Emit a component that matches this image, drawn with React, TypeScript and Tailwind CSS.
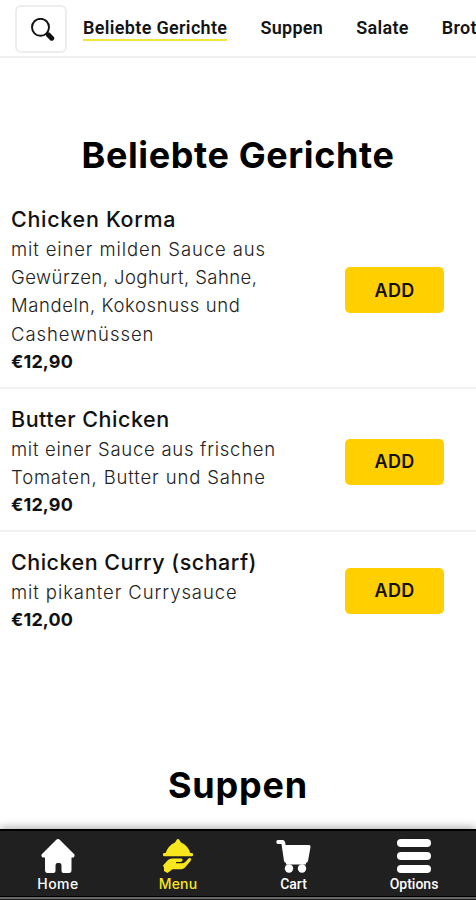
const categories = [
  { title: "Beliebte Gerichte", className: "ml-4 border-[#f3e63a] tracking-[0.33px]" },
  { title: "Suppen", className: "ml-[33px] border-transparent tracking-[0.3px]" },
  { title: "Salate", className: "ml-[33px] border-transparent tracking-[0.3px]" },
  { title: "Brot", className: "ml-[33px] border-transparent tracking-[0.3px]" },
];

const dishes = [
  {
    title: "Chicken Korma",
    spacing: "tracking-[0.7px]",
    lines: [
      { text: "mit einer milden Sauce aus", spacing: "tracking-[0.88px]" },
      { text: "Gewürzen, Joghurt, Sahne,", spacing: "tracking-[0.44px]" },
      { text: "Mandeln, Kokosnuss und", spacing: "tracking-[0.6px]" },
      { text: "Cashewnüssen", spacing: "tracking-[0.95px]" },
    ],
    price: "€12,90",
  },
  {
    title: "Butter Chicken",
    spacing: "tracking-[0.53px]",
    lines: [
      { text: "mit einer Sauce aus frischen", spacing: "tracking-[0.73px]" },
      { text: "Tomaten, Butter und Sahne", spacing: "tracking-[0.86px]" },
    ],
    price: "€12,90",
  },
  {
    title: "Chicken Curry (scharf)",
    spacing: "tracking-[0.49px]",
    lines: [{ text: "mit pikanter Currysauce", spacing: "tracking-[0.92px]" }],
    price: "€12,00",
  },
];

const SearchIcon = () => (
  <svg className="size-6" viewBox="0 0 24 24" fill="none" stroke="#111">
    <circle cx="9.500" cy="9.300" r="8.500" strokeWidth="1.900" />
    <path d="M15.500 15.500l2 2" strokeWidth="2" />
    <path d="M17.500 17l3.200 3.200" strokeWidth="5" strokeLinecap="round" />
  </svg>
);

const HomeIcon = () => (
  <svg className="h-[34px] w-[34px]" viewBox="0 0 34 34" fill="currentColor">
    <path d="M17 0Q18 0 19 1L33 15Q34.500 17 32.500 18.500H30.500V31Q30.500 34 28 34H22.500Q20.500 34 20.500 32V27Q20.500 24 18.500 24H16.500Q14.500 24 14.500 27V32Q14.500 34 12.500 34H6.500Q4 34 4 31V18.500H1.500Q-.5 17 1 15L15 1Q16 0 17 0Z" />
  </svg>
);

const MenuIcon = () => (
  <svg className="h-[34px] w-[32px]" viewBox="0 0 32 34" fill="currentColor">
    <path d="M16 0Q17.500 0 18 2L19 3.500Q26 6.500 28.500 14.500H3.500Q6 6.500 13 3.500L14 2Q14.500 0 16 0Z" />
    <rect x="1" y="14" width="30" height="3.200" rx="1.300" />
    <path d="M1 26.500L6 21Q7.500 19.500 10 19.500H19.500Q21 20 20.500 21.500Q20 22.800 18.500 23H14V24.200H20Q22 24.200 23.500 22.700L26.500 19.600Q28.200 18.500 29 19.700Q29.500 20.500 28.500 22L23 28.500Q21.500 30.300 19 30.300H10.500L5.500 34L2 32V29Z" />
  </svg>
);

const CartIcon = () => (
  <svg className="h-[34px] w-[35px]" viewBox="0 0 35 34" fill="currentColor">
    <path d="M2 1H6.500Q8.500 1 9 3L9.600 6H33Q34.800 6 34.500 8L32 22Q31.500 24 29.500 24H10.500Q8.500 24 8 22L5.500 5H2Q.3 5 .3 3Q.3 1 2 1Z" />
    <path d="M10 22H30V25.500H10Z" />
    <circle cx="13" cy="29.500" r="4.200" />
    <circle cx="26" cy="29.500" r="4.200" />
  </svg>
);

const OptionsIcon = () => (
  <svg className="h-[34px] w-[34px]" viewBox="0 0 34 34" fill="currentColor">
    <rect y="0" width="34" height="8" rx="4" />
    <rect y="13" width="34" height="8" rx="4" />
    <rect y="26" width="34" height="8" rx="4" />
  </svg>
);

const tabs = [
  { title: "Home", icon: HomeIcon, item: "w-[116px] text-white", label: "font-['Inter',sans-serif] text-[14px] tracking-[0.5px]" },
  { title: "Menu", icon: MenuIcon, item: "w-[124px] text-[#f8e71c]", label: "font-['Inter',sans-serif] text-[14px] tracking-[0.2px]" },
  { title: "Cart", icon: CartIcon, item: "w-[107px] text-white", label: "font-['Roboto',sans-serif] text-[14px]" },
  { title: "Options", icon: OptionsIcon, item: "w-[134px] text-white", label: "font-['Roboto',sans-serif] text-[14px]" },
];

const Header = () => (
  <header className="flex h-[58px] shrink-0 items-start overflow-hidden border-b-2 border-[#f0f0f0] pl-[15px] pt-[5px]">
    <button className="flex h-12 w-[52px] shrink-0 items-center justify-center rounded-md border-2 border-[#ededed] pl-1 pt-0.5">
      <SearchIcon />
    </button>
    {categories.map((category) => (
      <a
        key={category.title}
        className={`mt-[10px] h-[26px] shrink-0 whitespace-nowrap border-b-2 font-['Roboto',sans-serif] text-lg leading-[26px] font-semibold text-[#141414] ${category.className}`}
      >
        {category.title}
      </a>
    ))}
  </header>
);

export default function App() {
  return (
    <div className="flex h-[900px] w-[476px] flex-col overflow-hidden bg-white font-['Inter',sans-serif] text-[#111]">
      <Header />
      <main className="flex min-h-0 flex-1 flex-col">
        <h2 className="mt-[71px] h-[52px] text-center text-[36px] leading-[52px] font-bold tracking-[0.6px] text-black">
          Beliebte Gerichte
        </h2>
        <div className="mt-2">
          {dishes.map((dish) => (
            <div
              key={dish.title}
              className="flex items-center justify-between border-b-2 border-[#f2f2f2] pt-[15px] pr-8 pb-[10.8px] pl-[11px] last:border-transparent"
            >
              <div>
                <h3 className={`text-[21.5px] leading-[30px] font-medium ${dish.spacing}`}>{dish.title}</h3>
                <p className="pt-px text-[18.5px] leading-[28.2px] font-light text-[#222]">
                  {dish.lines.map((line) => (
                    <span key={line.text} className={`block whitespace-nowrap ${line.spacing}`}>{line.text}</span>
                  ))}
                </p>
                <p className="text-[18px] leading-[28.2px] font-bold tracking-[0.15px]">{dish.price}</p>
              </div>
              <button className="h-[46px] w-[99px] rounded-[5px] bg-[#ffcf00] text-[18px] font-semibold tracking-[0.3px]">ADD</button>
            </div>
          ))}
        </div>
        <h2 className="mt-[112px] text-center text-[36px] leading-[52px] font-bold tracking-[0.8px] text-black">Suppen</h2>
      </main>
      <nav className="flex h-[71px] shrink-0 flex-col border-t-2 border-black bg-[#202020] shadow-[0_-2px_8px_rgba(0,0,0,0.3)]">
        <div className="flex h-[65px] pt-2">
          {tabs.map((tab) => (
            <a key={tab.title} className={`flex shrink-0 flex-col items-center ${tab.item}`}>
              <tab.icon />
              <span className={`mt-px leading-5 font-medium ${tab.label}`}>{tab.title}</span>
            </a>
          ))}
        </div>
        <div className="h-[3px] border-t border-black bg-[#666]" />
      </nav>
    </div>
  );
}
